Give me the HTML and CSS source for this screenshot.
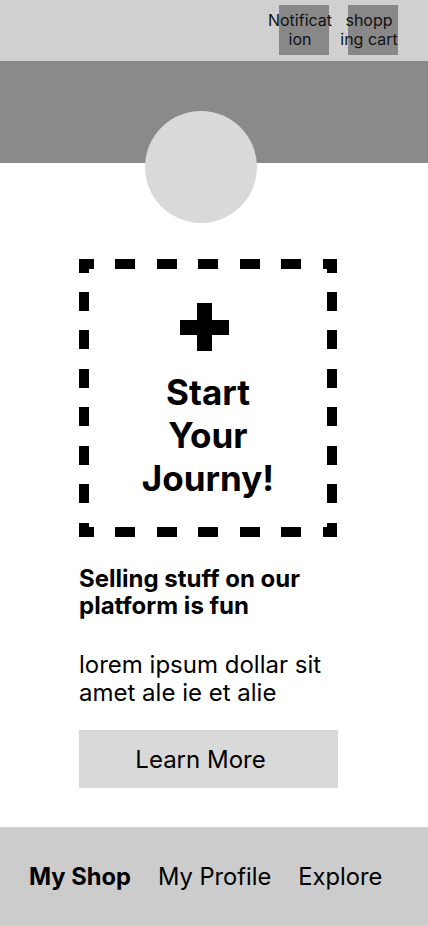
FILE: index.html
```html
<!DOCTYPE html>
<html lang="en">
<head>
<meta charset="utf-8">
<title>My Shop</title>
<link rel="stylesheet" href="styles.css">
</head>
<body>
<div class="page">
  <header class="topbar">
    <div class="icon-box"><span class="icon-label">Notificat<br>ion</span></div>
    <div class="icon-box"><span class="icon-label">shopp<br>ing cart</span></div>
  </header>
  <div class="banner"></div>
  <div class="avatar"></div>
  <main class="content">
    <div class="start-card">
      <svg class="plus" width="49" height="48" viewBox="0 0 49 48" aria-hidden="true">
        <rect x="17" y="0" width="15" height="48" fill="#000"/>
        <rect x="0" y="17" width="49" height="15" fill="#000"/>
      </svg>
      <div class="start-title">Start<br>Your<br>Journy!</div>
    </div>
    <h2 class="headline">Selling stuff on our platform is fun</h2>
    <p class="body-text">lorem ipsum dollar sit amet ale ie et alie</p>
    <button class="learn-btn">Learn More</button>
  </main>
  <nav class="bottom-nav">
    <span class="nav-item active">My Shop</span>
    <span class="nav-item">My Profile</span>
    <span class="nav-item">Explore</span>
  </nav>
</div>
</body>
</html>
```

FILE: styles.css
```css
* { box-sizing: border-box; }
html, body { margin: 0; padding: 0; }
body {
  font-family: Inter, "Noto Sans", sans-serif;
  color: #000;
  background: #fff;
}
.page {
  width: 428px;
  min-height: 926px;
  display: flex;
  flex-direction: column;
}
.topbar {
  height: 61px;
  background: #d0d0d0;
  display: flex;
  justify-content: flex-end;
  align-items: flex-start;
  padding: 5px 30px 0 0;
  gap: 19px;
}
.icon-box {
  width: 50px;
  height: 50px;
  background: #888888;
  display: flex;
  align-items: center;
  justify-content: center;
}
.icon-label {
  font-size: 16px;
  line-height: 19px;
  text-align: center;
  white-space: nowrap;
  color: #111;
  margin-right: 8px;
}
.banner {
  height: 102px;
  background: #8a8a8a;
}
.avatar {
  width: 112px;
  height: 112px;
  border-radius: 50%;
  background: #d9d9d9;
  margin: -52px 0 0 145px;
}
.content {
  padding-left: 79px;
  display: flex;
  flex-direction: column;
}
.start-card {
  margin-top: 36px;
  width: 258px;
  height: 278px;
  display: flex;
  flex-direction: column;
  align-items: center;
  padding-top: 44px;
  background:
    repeating-linear-gradient(90deg, #000 0 14.5px, transparent 14.5px 36px, #000 36px 41.5px) top left / 100% 10px no-repeat,
    repeating-linear-gradient(90deg, #000 0 14.5px, transparent 14.5px 36px, #000 36px 41.5px) bottom left / 100% 10px no-repeat,
    repeating-linear-gradient(180deg, #000 0 13.5px, transparent 13.5px 33px, #000 33px 38.5px) top left / 10px 100% no-repeat,
    repeating-linear-gradient(180deg, #000 0 13.5px, transparent 13.5px 33px, #000 33px 38.5px) top right / 10px 100% no-repeat;
}
.plus {
  display: block;
  margin-left: -7px;
}
.start-title {
  margin-top: 20px;
  font-size: 35px;
  line-height: 43px;
  font-weight: 700;
  text-align: center;
}
.headline {
  margin: 28px 0 0;
  width: 259px;
  font-size: 24px;
  line-height: 27px;
  font-weight: 700;
}
.body-text {
  margin: 32px 0 0;
  width: 259px;
  font-size: 24px;
  line-height: 28px;
}
.learn-btn {
  margin-top: 23px;
  width: 259px;
  height: 58px;
  border: none;
  background: #d9d9d9;
  font-family: Inter, "Noto Sans", sans-serif;
  font-size: 24px;
  color: #000;
  padding: 0 16px 0 0;
}
.bottom-nav {
  margin-top: auto;
  height: 99px;
  background: #cccccc;
  display: flex;
  align-items: center;
  padding-left: 29px;
  gap: 27px;
}
.nav-item {
  font-size: 23.7px;
  white-space: nowrap;
}
.nav-item.active { font-weight: 700; }
```
